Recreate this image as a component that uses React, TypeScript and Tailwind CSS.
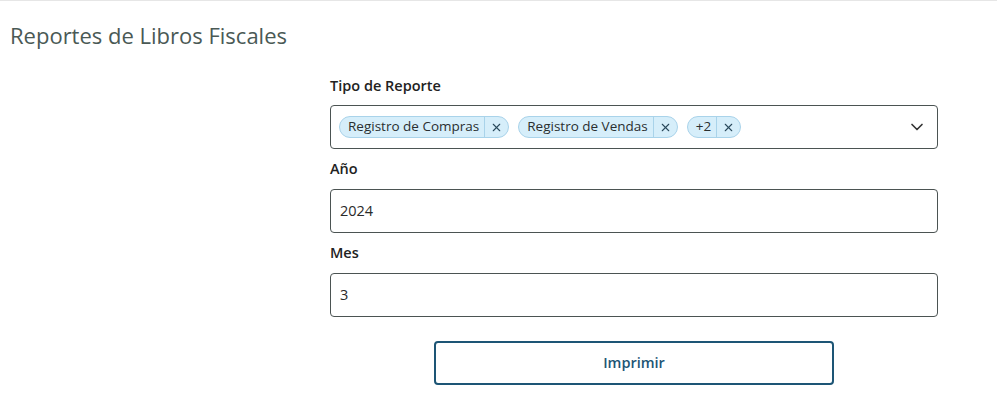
import React from 'react';
import { ChevronDown, X } from 'lucide-react';

const Chip: React.FC<{ label: string }> = ({ label }) => (
  <span className="flex h-[22px] items-center rounded-full border border-[#a9d3ea] bg-[#d6eefa] text-[13.5px] text-[#2a2f30]">
    <span className="pl-[8px] pr-[5px] leading-none">{label}</span>
    <span className="flex h-full items-center border-l border-[#a9d3ea] px-[5px]">
      <X className="h-[13px] w-[13px] text-[#2b4a5c]" strokeWidth={2} />
    </span>
  </span>
);

const App: React.FC = () => {
  return (
    <div className="h-[404px] w-[997px] border-t border-[#e6e6e6] bg-white font-['Open_Sans',sans-serif]">
      <h1 className="pl-[10px] pt-[19px] text-[22px] leading-[30px] text-[#4a5955]">
        Reportes de Libros Fiscales
      </h1>

      <div className="ml-[330px] mt-[26px] flex w-[608px] flex-col">
        <label className="text-[14.5px] font-semibold leading-[20px] text-[#222]">Tipo de Reporte</label>
        <div className="mt-[9px] flex h-[44px] items-center rounded-[4px] border border-[#4b5352] pl-[8px] pr-[10px]">
          <div className="flex flex-1 items-center gap-[9px]">
            <Chip label="Registro de Compras" />
            <Chip label="Registro de Vendas" />
            <Chip label="+2" />
          </div>
          <ChevronDown className="h-[20px] w-[20px] text-[#333]" strokeWidth={2} />
        </div>

        <label className="mt-[10px] text-[14.5px] font-semibold leading-[20px] text-[#222]">Año</label>
        <div className="mt-[10px] flex h-[44px] items-center rounded-[4px] border border-[#4b5352] px-[9px] text-[14.5px] text-[#2a2a2a]">
          2024
        </div>

        <label className="mt-[10px] text-[14.5px] font-semibold leading-[20px] text-[#222]">Mes</label>
        <div className="mt-[10px] flex h-[44px] items-center rounded-[4px] border border-[#4b5352] px-[9px] text-[14.5px] text-[#2a2a2a]">
          3
        </div>

        <div className="mt-[24px] flex justify-center">
          <button className="h-[44px] w-[400px] rounded-[4px] border-2 border-[#1d5575] text-[14.5px] font-semibold text-[#1d5575]">
            Imprimir
          </button>
        </div>
      </div>
    </div>
  );
};

export default App;
